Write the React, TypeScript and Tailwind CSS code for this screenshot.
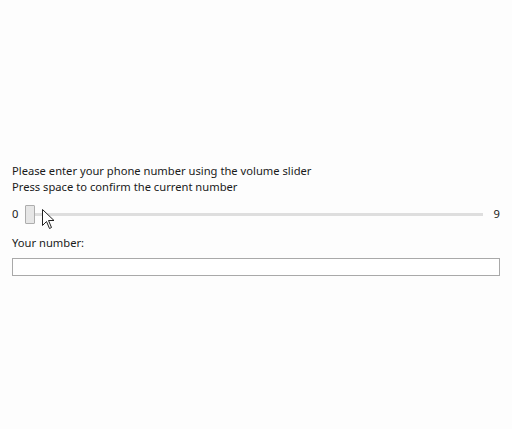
export default function App() {
    return (
        <div className="relative w-[512px] h-[429px] bg-[#fdfdfd] text-[#1a1a1a] text-[11.2px] leading-[16px] font-['Noto_Sans',sans-serif] overflow-hidden">
            <div className="pt-[163px] px-[12px]">
                <p>Please enter your phone number using the volume slider</p>
                <p>Press space to confirm the current number</p>

                {/* slider row */}
                <div className="mt-[9px] flex items-center h-[20px]">
                    <span className="w-[13px]">0</span>
                    <div className="flex-1 flex items-center">
                        <div className="w-[10px] h-[19px] bg-[#e6e6e6] border border-[#adadad] rounded-[1px]" />
                        <div className="flex-1 h-[3px] bg-[#dedede]" />
                    </div>
                    <span className="w-[17px] text-right">9</span>
                </div>

                <p className="mt-[11px]">Your number:</p>
                <div className="mt-[7px] h-[18px] w-[488px] border border-[#a9a9a9] bg-white" />
            </div>

            {/* mouse pointer */}
            <svg className="absolute left-[42px] top-[209px]" width="13" height="21" viewBox="0 0 13 21">
                <path d="M0.5 0.5 L0.5 16.5 L4.5 12.5 L7.5 19.5 L9.5 18.5 L6.5 11.5 L12 11.5 Z" fill="#ffffff" stroke="#222222" strokeWidth="1" strokeLinejoin="round" />
            </svg>
        </div>
    );
}
